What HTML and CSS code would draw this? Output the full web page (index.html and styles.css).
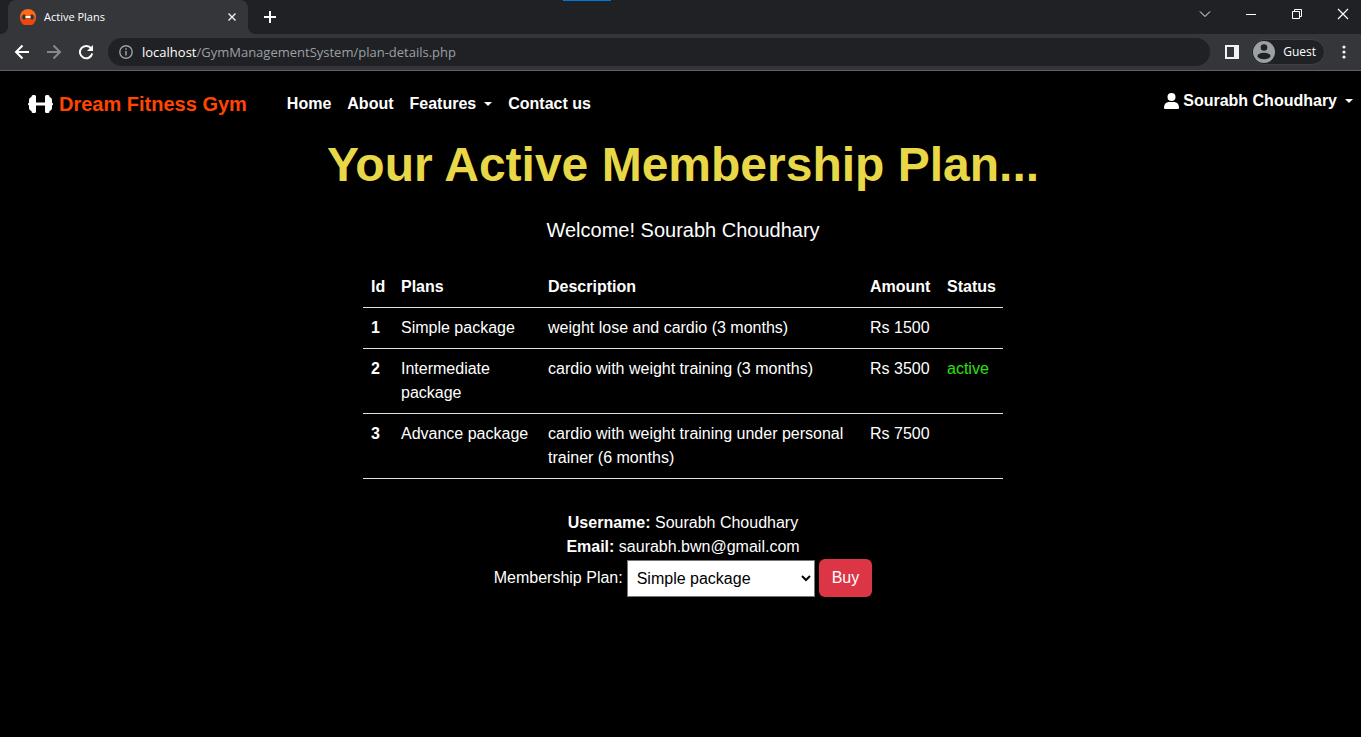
FILE: index.html
```html
<!DOCTYPE html>
<html lang="en">
<head>
<meta charset="utf-8">
<title>Active Plans</title>
<link rel="stylesheet" href="styles.css">
</head>
<body>
<div class="tabstrip">
  <div class="tab">
    <svg class="favicon" width="16" height="16" viewBox="0 0 16 16"><circle cx="8" cy="8" r="8" fill="#ff6a14"/><path d="M0 9a8 8 0 0 0 16 0z" fill="#ee470d"/><rect x="1.500" y="7" width="13" height="2" fill="#5a5a60"/><rect x="2.500" y="5.500" width="3" height="5" rx="1" fill="#30343c"/><rect x="10.500" y="5.500" width="3" height="5" rx="1" fill="#30343c"/><rect x="5.500" y="7" width="5" height="2" fill="#fff"/></svg>
    <span class="tab-title">Active Plans</span>
    <button class="icon-btn" aria-label="Close tab"><svg width="8" height="8" viewBox="0 0 8 8" stroke="#f1f3f4" stroke-width="1.4"><path d="M.5.5l7 7M7.5.5l-7 7"/></svg></button>
  </div>
  <button class="icon-btn new-tab" aria-label="New tab"><svg width="12" height="12" viewBox="0 0 12 12" stroke="#fff" stroke-width="2"><path d="M6 0v12M0 6h12"/></svg></button>
  <div class="accent"></div>
  <div class="window-controls">
    <button class="icon-btn" aria-label="Search tabs"><svg width="12" height="12" viewBox="0 0 12 12" fill="none" stroke="#fff"><path d="M1 3.500l5 5 5-5"/></svg></button>
    <button class="icon-btn" aria-label="Minimize"><svg width="12" height="12" viewBox="0 0 12 12" stroke="#fff"><path d="M1 6.500h10"/></svg></button>
    <button class="icon-btn" aria-label="Restore"><svg width="12" height="12" viewBox="0 0 12 12" fill="none" stroke="#fff"><path d="M1.500 3.500h7v7h-7zM3.500 3.500v-2h7v7h-2"/></svg></button>
    <button class="icon-btn" aria-label="Close window"><svg width="12" height="12" viewBox="0 0 12 12" stroke="#fff" stroke-width="1.200"><path d="M1 1l10 10M11 1L1 11"/></svg></button>
  </div>
</div>
<div class="toolbar">
  <div class="history">
    <button class="icon-btn" aria-label="Back"><svg width="16" height="16" viewBox="0 0 16 16" fill="none" stroke="#fff" stroke-width="2"><path d="M15 8H2M8.500 1.500L2 8l6.500 6.500"/></svg></button>
    <button class="icon-btn" aria-label="Forward"><svg width="16" height="16" viewBox="0 0 16 16" fill="none" stroke="#86888b" stroke-width="2"><path d="M1 8h13M7.500 1.500L14 8l-6.500 6.500"/></svg></button>
    <button class="icon-btn" aria-label="Reload"><svg width="16" height="16" viewBox="0 0 16 16"><path d="M13.200 4.500A6.200 6.200 0 1 0 14.200 9.500" fill="none" stroke="#fff" stroke-width="2"/><path d="M15 1v6H9z" fill="#fff"/></svg></button>
  </div>
  <div class="address">
    <svg width="14" height="14" viewBox="0 0 14 14"><circle cx="7" cy="7" r="6.200" fill="none" stroke="#9aa0a6" stroke-width="1.400"/><path d="M7 6v4.500M7 3.300v1.500" stroke="#9aa0a6" stroke-width="1.500"/></svg>
    <span class="url"><span class="host">localhost</span>/GymManagementSystem/plan-details.php</span>
  </div>
  <button class="icon-btn panel" aria-label="Side panel"><svg width="14" height="14" viewBox="0 0 14 14"><path fill-rule="evenodd" d="M0 0h14v14H0zM2 2v10h7V2z" fill="#f1f3f4"/></svg></button>
  <button class="guest">
    <svg width="22" height="22" viewBox="0 0 22 22"><circle cx="11" cy="11" r="11" fill="#9aa0a6"/><circle cx="11" cy="6.500" r="3.300" fill="#202124"/><ellipse cx="11" cy="15" rx="6.600" ry="3.300" fill="#202124"/></svg>
    <span>Guest</span>
  </button>
  <button class="icon-btn menu" aria-label="Menu"><svg width="4" height="14" viewBox="0 0 4 14" fill="#f1f3f4"><circle cx="2" cy="2" r="1.600"/><circle cx="2" cy="7" r="1.600"/><circle cx="2" cy="12" r="1.600"/></svg></button>
</div>
<header class="navbar">
  <a class="brand" href="#">
    <svg width="25" height="18" viewBox="0 0 25 18" fill="#fff"><path d="M5 0h1.500Q8 0 8 1.500v6h9v-6Q17 0 18.500 0H20q1.500 0 1.500 1.500V2Q24 2.500 24 5v2.500q1 .5 1 1.500t-1 1.500V13q0 2.500-2.500 3v.5Q21.500 18 20 18h-1.500Q17 18 17 16.500v-6H8v6Q8 18 6.500 18H5q-1.500 0-1.500-1.500V16Q1 15.500 1 13v-2.500Q0 10 0 9t1-1.500V5q0-2.500 2.500-3v-.5Q3.500 0 5 0z"/></svg>
    Dream Fitness Gym
  </a>
  <nav class="links">
    <a href="#">Home</a>
    <a href="#">About</a>
    <a href="#" class="dropdown">Features</a>
    <a href="#">Contact us</a>
  </nav>
  <a href="#" class="user dropdown">
    <svg width="15" height="16" viewBox="0 0 15 16" fill="#fff"><circle cx="7.500" cy="4" r="4"/><path d="M0 15c0-4 2-6 5.500-6h4C13 9 15 11 15 15q0 1-1 1H1q-1 0-1-1z"/></svg>
    Sourabh Choudhary
  </a>
</header>
<main class="content">
  <h1>Your Active Membership Plan...</h1>
  <p class="welcome">Welcome! Sourabh Choudhary</p>
  <table class="plans">
    <colgroup><col class="c-id"><col class="c-plan"><col class="c-desc"><col class="c-amount"><col class="c-status"></colgroup>
    <thead>
      <tr><th scope="col">Id</th><th scope="col">Plans</th><th scope="col">Description</th><th scope="col">Amount</th><th scope="col">Status</th></tr>
    </thead>
    <tbody>
      <tr><th scope="row">1</th><td>Simple package</td><td>weight lose and cardio (3 months)</td><td>Rs 1500</td><td></td></tr>
      <tr><th scope="row">2</th><td>Intermediate package</td><td>cardio with weight training (3 months)</td><td>Rs 3500</td><td class="active">active</td></tr>
      <tr><th scope="row">3</th><td>Advance package</td><td>cardio with weight training under personal trainer (6 months)</td><td>Rs 7500</td><td></td></tr>
    </tbody>
  </table>
  <div><b>Username:</b> Sourabh Choudhary</div>
  <div><b>Email:</b> saurabh.bwn@gmail.com</div>
  <form class="buy-form">
    <label for="plan">Membership Plan:</label>
    <select id="plan">
      <option>Simple package</option>
      <option>Intermediate package</option>
      <option>Advance package</option>
    </select>
    <button type="button" class="buy">Buy</button>
  </form>
</main>
</body>
</html>
```
FILE: styles.css
```css
* { box-sizing: border-box; }
body {
  margin: 0;
  min-height: 100vh;
  background: #000;
  color: #fff;
  font: 16px/24px "Liberation Sans", Arial, sans-serif;
}
a { color: inherit; text-decoration: none; }
svg { display: block; flex: none; }
button { font: inherit; color: inherit; cursor: pointer; }
.icon-btn {
  display: flex;
  align-items: center;
  justify-content: center;
  padding: 0;
  border: 0;
  background: none;
}

/* Browser frame */
.tabstrip {
  display: flex;
  height: 34px;
  padding-left: 8px;
  background: #202124;
  font: 12px/16px "Open Sans", "Noto Sans", sans-serif;
  position: relative;
}
.tab {
  display: flex;
  align-items: center;
  gap: 8px;
  width: 240px;
  padding: 0 12px;
  border-radius: 8px 8px 0 0;
  background: #35363a;
  position: relative;
}
.tab::before, .tab::after {
  content: "";
  position: absolute;
  bottom: 0;
  width: 8px;
  height: 8px;
}
.tab::before { left: -8px; background: radial-gradient(circle at 0 0, #202124 8px, #35363a 8px); }
.tab::after { right: -8px; background: radial-gradient(circle at 100% 0, #202124 8px, #35363a 8px); }
.tab-title { flex: 1; font-size: 11px; }
.new-tab { width: 44px; }
.accent {
  position: absolute;
  top: 0;
  left: 563px;
  width: 48px;
  height: 1px;
  background: #0078d7;
}
.window-controls { display: flex; margin-left: auto; height: 28px; }
.window-controls .icon-btn { width: 46px; }
.window-controls .icon-btn:last-child { width: 41px; padding-left: 5px; }
.toolbar {
  display: flex;
  align-items: center;
  height: 37px;
  padding: 0 5px 0 14px;
  border-bottom: 1px solid #5f6063;
  background: #35363a;
  font: 12px/16px "Open Sans", "Noto Sans", sans-serif;
}
.history { display: flex; gap: 16px; }
.address {
  display: flex;
  flex: 1;
  align-items: center;
  gap: 9px;
  height: 28px;
  margin-left: 14px;
  padding-left: 11px;
  border-radius: 14px;
  background: #202124;
}
.url { font-size: 13px; line-height: 20px; color: #9aa0a6; }
.host { color: #fff; }
.panel { margin-left: 15px; }
.guest {
  display: flex;
  align-items: center;
  gap: 8px;
  height: 26px;
  margin-left: 12px;
  padding: 0 8px 0 1px;
  border: 1px solid #3f4044;
  border-radius: 13px;
  background: #202124;
}
.menu { width: 24px; margin-left: 7px; }

/* Site header */
.navbar {
  display: flex;
  align-items: flex-start;
  padding: 9px 8px 0 28px;
  font-weight: 700;
}
.brand {
  display: flex;
  align-items: center;
  gap: 6px;
  padding: 12px 0 8px;
  font-size: 20px;
  color: #ff4500;
}
.links { display: flex; gap: 16px; margin: 12px 0 0 40px; }
.dropdown { display: flex; align-items: center; }
.dropdown::after {
  content: "";
  margin-left: 8px;
  border: 4px solid transparent;
  border-top-color: #fff;
  border-bottom: 0;
}
.user { gap: 4px; margin: 9px 0 0 auto; }
.user::after { margin-left: 4px; }

/* Page content */
.content {
  display: flex;
  flex-direction: column;
  align-items: center;
  padding: 12px 0 0 5px;
  text-align: center;
}
h1 {
  margin: 0;
  font-size: 48px;
  line-height: 58px;
  color: #e8d848;
}
.welcome { margin: 24px 0; font-size: 20px; line-height: 25px; }
.plans {
  width: 640px;
  max-width: 100%;
  margin-bottom: 32px;
  border-collapse: collapse;
  table-layout: fixed;
  text-align: left;
}
.plans th, .plans td {
  padding: 8px;
  border-bottom: 1px solid #dee2e6;
  vertical-align: top;
}
.c-id { width: 30px; }
.c-plan { width: 147px; }
.c-desc { width: 322px; }
.c-amount { width: 77px; }
.c-status { width: 64px; }
.plans .active { color: #2be010; }
.buy-form { display: flex; align-items: center; gap: 4px; }
select {
  width: 188px;
  height: 37px;
  padding: 0 5px;
  border: 1px solid #767676;
  border-radius: 0;
  background-color: #fff;
  color: #000;
  font: inherit;
}
.buy {
  height: 38px;
  padding: 0 13px;
  border: 0;
  border-radius: 6px;
  background: #dc3545;
}
```
